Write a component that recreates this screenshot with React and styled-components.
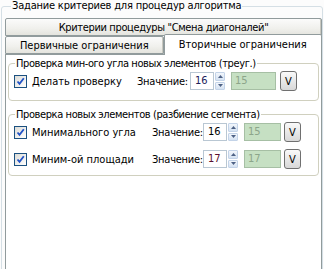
import * as React from 'react';
import styled, { createGlobalStyle } from 'styled-components';

const GlobalStyle = createGlobalStyle`
  html, body {
    margin: 0;
    padding: 0;
    background: #ffffff;
  }
  body {
    font-family: 'DejaVu Sans Condensed', 'DejaVu Sans', 'Liberation Sans', sans-serif;
    font-stretch: condensed;
    font-size: 11px;
    color: #000;
  }
`;

const Window = styled.div`
  width: 324px;
  height: 269px;
  overflow: hidden;
  background: #fcfcfc;
  padding: 0 1px;
  box-sizing: border-box;
`;

const OuterGroup = styled.fieldset`
  margin: 0;
  padding: 6px 0 0 3px;
  height: 300px;
  border: 1px solid #d5dfe5;
  border-radius: 3px;
  box-sizing: border-box;
  min-width: 0;
  & > legend {
    margin-left: 6px;
    padding: 0 1px;
    line-height: 12px;
    height: 12px;
    letter-spacing: -0.2px;
  }
`;

const TabControl = styled.div`
  width: 317px;
  display: flex;
  flex-direction: column;
`;

const TabRow = styled.div`
  display: flex;
  height: 18px;
  align-items: flex-end;
  position: relative;
  z-index: ${(p) => (p.$front ? 2 : 1)};
`;

const Tab = styled.div`
  flex: 1;
  box-sizing: border-box;
  display: flex;
  align-items: center;
  justify-content: center;
  height: ${(p) => (p.$active ? '21px' : '18px')};
  margin-bottom: ${(p) => (p.$active ? '-1px' : '0')};
  padding-bottom: ${(p) => (p.$active ? '2px' : '0')};
  background: ${(p) =>
    p.$active ? '#ffffff' : 'linear-gradient(#fbfbfb, #f0f0ec 60%, #e4e4de)'};
  border: 1px solid #919b9c;
  border-bottom: ${(p) => (p.$active ? 'none' : '1px solid #919b9c')};
  border-radius: 2px 2px 0 0;
  box-shadow: ${(p) => (p.$active ? 'none' : 'inset -1px 0 0 #c8c8c0')};
  white-space: nowrap;
  letter-spacing: ${(p) => p.$spacing || 0}px;
`;

const Panel = styled.div`
  background: #ffffff;
  border: 1px solid #919b9c;
  height: 240px;
  padding: 2px 2px 0 2px;
  display: flex;
  flex-direction: column;
  gap: 7px;
`;

const Group = styled.fieldset`
  margin: 0;
  padding: 0 8px ${(p) => p.$bottom}px 5px;
  border: 1px solid #d0d0bf;
  border-radius: 4px;
  min-width: 0;
  display: flex;
  flex-direction: column;
  gap: 5px;
  & > legend {
    margin-left: 1px;
    padding: 0 1px;
    line-height: 13px;
    height: 13px;
    color: #000;
    letter-spacing: -0.4px;
  }
`;

const Row = styled.div`
  display: flex;
  align-items: center;
  height: ${(p) => p.$height}px;
`;

const CheckLabel = styled.label`
  display: flex;
  align-items: center;
  gap: 5px;
  width: ${(p) => p.$width}px;
`;

const Box = styled.span`
  width: 11px;
  height: 11px;
  border: 1px solid #1c5180;
  background: linear-gradient(135deg, #dcdcd7, #ffffff);
  display: inline-flex;
  align-items: center;
  justify-content: center;
`;

const ValueLabel = styled.span`
  width: ${(p) => p.$width}px;
  flex: none;
  white-space: nowrap;
  letter-spacing: -0.25px;
`;

const SpinInput = styled.span`
  width: 24px;
  height: 18px;
  box-sizing: border-box;
  border: 1px solid #b9c7d3;
  background: #fff;
  line-height: 16px;
  padding-left: 4px;
  color: ${(p) => p.$color};
`;

const SpinButtons = styled.span`
  display: flex;
  flex-direction: column;
  width: 10px;
  height: 18px;
  margin-left: 1px;
  gap: 1px;
`;

const SpinBtn = styled.span`
  flex: 1;
  border: 1px solid #c3d3e8;
  border-radius: 1px;
  background: linear-gradient(#f2f6fb, #d5e2f2);
  display: flex;
  align-items: center;
  justify-content: center;
`;

const Readonly = styled.span`
  width: ${(p) => p.$width}px;
  height: 18px;
  box-sizing: border-box;
  margin-left: 6px;
  border: 1px solid #a6bfa4;
  background: #c6e0c3;
  color: #8ca58a;
  line-height: 16px;
  padding-left: 3px;
`;

const VButton = styled.button`
  width: 17px;
  height: 20px;
  margin: 0 0 0 ${(p) => p.$gap}px;
  padding: 0;
  border: 1px solid #707070;
  border-radius: 3px;
  background: linear-gradient(#fafafa, #e8e8e8 50%, #d8d8d8);
  font: inherit;
  color: #000;
  flex: none;
`;

const Check = () => (
  <Box>
    <svg width="9" height="9" viewBox="0 0 9 9">
      <path d="M1.5 4.5 L3.5 6.8 L7.8 1.2" fill="none" stroke="#2152c6" strokeWidth="1.8" />
    </svg>
  </Box>
);

const Arrow = ({ up }) => (
  <svg width="5" height="3" viewBox="0 0 5 3">
    <path d={up ? 'M0 3 L2.5 0 L5 3 Z' : 'M0 0 L2.5 3 L5 0 Z'} fill="#4d6185" />
  </svg>
);

const ValueControl = ({ value, color, result, labelWidth, resultWidth, gap }) => (
  <>
    <ValueLabel $width={labelWidth}>Значение:</ValueLabel>
    <SpinInput $color={color}>{value}</SpinInput>
    <SpinButtons>
      <SpinBtn>
        <Arrow up />
      </SpinBtn>
      <SpinBtn>
        <Arrow />
      </SpinBtn>
    </SpinButtons>
    <Readonly $width={resultWidth}>{result}</Readonly>
    <VButton $gap={gap}>V</VButton>
  </>
);

export default function App() {
  return (
    <Window>
      <GlobalStyle />
      <OuterGroup>
        <legend>Задание критериев для процедур алгоритма</legend>
        <TabControl>
          <TabRow>
            <Tab $spacing={-0.35}>Критерии процедуры "Смена диагоналей"</Tab>
          </TabRow>
          <TabRow $front>
            <Tab>Первичные ограничения</Tab>
            <Tab $active>Вторичные ограничения</Tab>
          </TabRow>
          <Panel>
            <Group $bottom={8}>
              <legend>Проверка мин-ого угла новых элементов (треуг.)</legend>
              <Row $height={22}>
                <CheckLabel $width={123}>
                  <Check />
                  Делать проверку
                </CheckLabel>
                <ValueControl
                  value="16"
                  color="#20205a"
                  result="15"
                  labelWidth={53}
                  resultWidth={45}
                  gap={4}
                />
              </Row>
            </Group>
            <Group $bottom={5}>
              <legend>Проверка новых элементов (разбиение сегмента)</legend>
              <Row $height={22}>
                <CheckLabel $width={138}>
                  <Check />
                  Минимального угла
                </CheckLabel>
                <ValueControl
                  value="16"
                  color="#000"
                  result="15"
                  labelWidth={51}
                  resultWidth={37}
                  gap={3}
                />
              </Row>
              <Row $height={22}>
                <CheckLabel $width={138}>
                  <Check />
                  Миним-ой площади
                </CheckLabel>
                <ValueControl
                  value="17"
                  color="#5a1030"
                  result="17"
                  labelWidth={51}
                  resultWidth={37}
                  gap={3}
                />
              </Row>
            </Group>
          </Panel>
        </TabControl>
      </OuterGroup>
    </Window>
  );
}
